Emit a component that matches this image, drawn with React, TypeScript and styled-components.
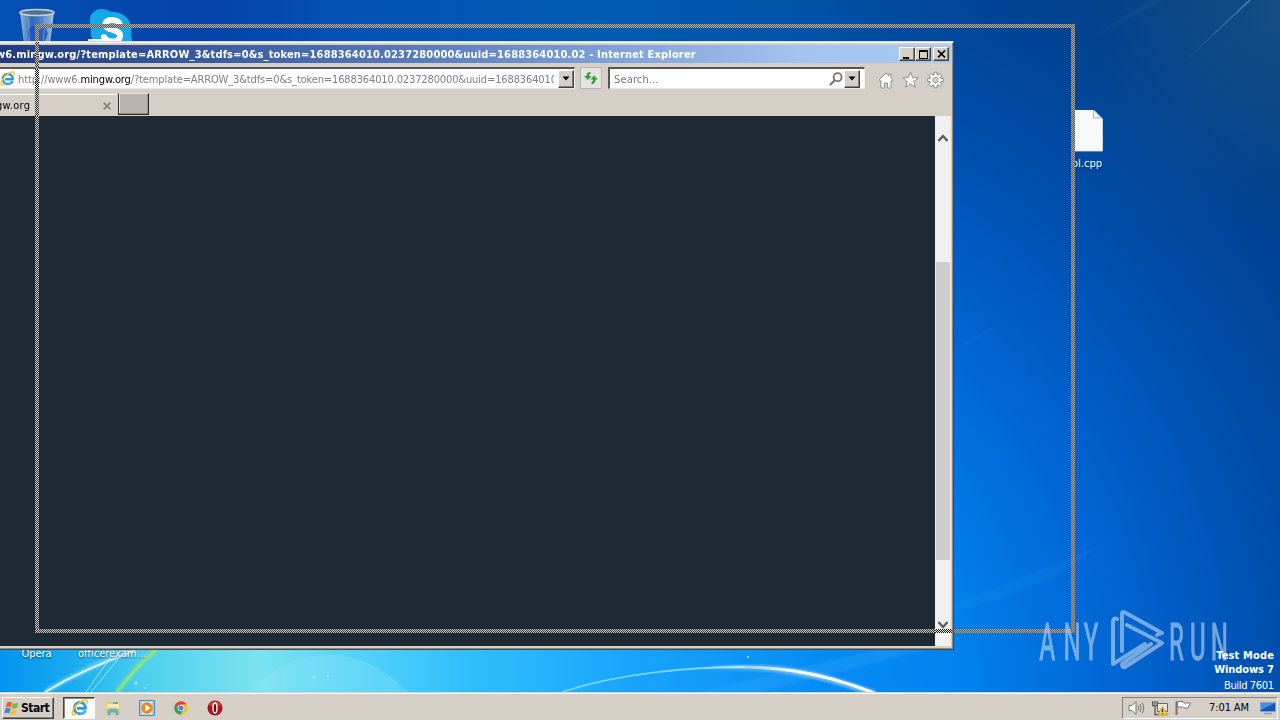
import React from 'react';
import styled, { createGlobalStyle, css } from 'styled-components';

const FACE = '#d5cfc7';

const GlobalStyle = createGlobalStyle`
  html, body { margin: 0; padding: 0; overflow: hidden; }
  body { font-family: 'DejaVu Sans Condensed', 'DejaVu Sans', sans-serif; font-stretch: condensed; font-size: 11px; color: #000; }
  * { box-sizing: border-box; }
  svg { display: block; flex: none; }
`;

const Screen = styled.div`
  position: relative;
  width: 1280px;
  height: 720px;
  overflow: hidden;
  display: flex;
  flex-direction: column;
  background: #0057b8;
`;

const Desktop = styled.main`
  position: relative;
  flex: 1;
  min-height: 0;
  overflow: hidden;
`;

const Wallpaper = styled.svg`
  position: absolute;
  inset: 0;
`;

const DesktopItem = styled.div<{ $x: number; $y: number; $w: number }>`
  position: absolute;
  left: ${p => p.$x}px;
  top: ${p => p.$y}px;
  width: ${p => p.$w}px;
  display: flex;
  flex-direction: column;
  align-items: center;
  color: #fff;
`;

const ItemLabel = styled.span<{ $spacing?: number }>`
  line-height: 14px;
  white-space: nowrap;
  letter-spacing: ${p => p.$spacing ?? 0}px;
  text-shadow: 0 1px 2px rgba(0, 20, 60, 0.7);
`;

const BuildInfo = styled.div`
  position: absolute;
  right: 6px;
  top: 649px;
  display: flex;
  flex-direction: column;
  align-items: flex-end;
  color: #fff;
  line-height: 14px;
`;

const BuildLine = styled.span<{ $bold?: boolean; $spacing: number }>`
  font-weight: ${p => (p.$bold ? 700 : 400)};
  letter-spacing: ${p => p.$spacing}px;
  margin-right: ${p => -p.$spacing}px;
  padding-top: ${p => (p.$bold ? 0 : 2)}px;
`;

const Watermark = styled.svg`
  position: absolute;
  left: 1034px;
  top: 606px;
`;

const Window = styled.section`
  position: absolute;
  left: 0;
  top: 41px;
  width: 954px;
  height: 609px;
  overflow: hidden;
  isolation: isolate;
  display: flex;
  flex-direction: column;
  background: ${FACE};
  border-top: 1px solid #d6d6d6;
  border-right: 1px solid #45484a;
  border-bottom: 1px solid #45484a;
  box-shadow: inset 0 1px #fff, inset -1px -1px #8c8880;
  padding: 3px 2px 3px 0;
`;

const TitleBar = styled.header`
  height: 18px;
  flex: none;
  display: flex;
  align-items: center;
  padding-right: 2px;
  background: linear-gradient(90deg, #1e3b80 0, #3a5a9f 200px, #5478ba 400px, #7c9fd6 600px, #a2c4f0 800px, #a6caf0 100%);
`;

const TitleText = styled.h1`
  flex: 1;
  margin: 0 0 0 -4px;
  padding-top: 1px;
  font-size: 11px;
  line-height: 17px;
  font-weight: 700;
  color: #fff;
  white-space: nowrap;
  letter-spacing: 0.168px;
`;

const raised = css`
  background: ${FACE};
  border: 1px solid;
  border-color: #fff #404040 #404040 #fff;
  box-shadow: inset -1px -1px #84807a;
`;

const CaptionButton = styled.button<{ $gap?: boolean }>`
  ${raised}
  width: 16px;
  height: 14px;
  padding: 0;
  margin-left: ${p => (p.$gap ? 2 : 0)}px;
  display: flex;
  align-items: center;
  justify-content: center;
`;

const NavBar = styled.nav`
  height: 30px;
  flex: none;
  display: flex;
  align-items: flex-start;
  padding-top: 4px;
`;

const Field = styled.div<{ $w: number; $open?: boolean }>`
  width: ${p => p.$w}px;
  height: 22px;
  display: flex;
  align-items: center;
  overflow: hidden;
  background: #fff;
  border-style: solid;
  border-color: #57534f #f5f2ee #e9e5e0 #57534f;
  border-width: 2px 1px 1px ${p => (p.$open ? 0 : 2)}px;
`;

const AddressText = styled.span`
  width: 536px;
  margin-left: 3px;
  padding-top: 2px;
  overflow: hidden;
  white-space: nowrap;
  line-height: 17px;
  color: #808080;
  letter-spacing: -0.13px;
`;

const Host = styled.span`
  color: #000;
`;

const SearchText = styled.span`
  flex: 1;
  padding: 2px 0 0 4px;
  color: #777;
  letter-spacing: 0.15px;
`;

const DropButton = styled.button<{ $ml?: number; $mr?: number }>`
  ${raised}
  flex: none;
  width: 16px;
  height: 18px;
  padding: 0;
  margin-left: ${p => p.$ml ?? 0}px;
  margin-right: ${p => p.$mr ?? 0}px;
  display: flex;
  align-items: center;
  justify-content: center;
`;

const RefreshButton = styled.button`
  width: 22px;
  height: 22px;
  margin: 0 6px 0 5px;
  padding: 0;
  display: flex;
  align-items: center;
  justify-content: center;
  background: #e5e3e0;
  border: 1px solid #b6b6b9;
`;

const Tools = styled.div`
  display: flex;
  gap: 8px;
  padding: 4px 0 0 13px;
`;

const TabStrip = styled.div`
  height: 23px;
  flex: none;
  display: flex;
`;

const Tab = styled.div`
  width: 117px;
  height: 22px;
  margin-top: 1px;
  display: flex;
  align-items: center;
  justify-content: space-between;
  padding-right: 6px;
  border-top: 1px solid #fff;
`;

const TabTitle = styled.span`
  margin-left: -4px;
  letter-spacing: 0.25px;
`;

const NewTab = styled.button`
  width: 31px;
  height: 22px;
  margin: 0 0 0 1px;
  padding: 0;
  background: #bbb4ae;
  border: 1px solid #2c2c2c;
  border-top-color: #e9e6e2;
  box-shadow: inset -1px -1px #938d87, inset 1px 0 #e9e6e2;
`;

const Content = styled.div`
  flex: 1;
  min-height: 0;
  display: flex;
`;

const PageView = styled.div`
  width: 935px;
  flex: none;
  background: #1e2a33;
`;

const ScrollBar = styled.div`
  flex: 1;
  display: flex;
  flex-direction: column;
  background: #f0f0f1;
  border-right: 1px solid #f7e9d6;
  padding: 17px 0 16px 1px;
`;

const ScrollTrack = styled.div`
  flex: 1;
  padding-top: 118px;
`;

const ScrollThumb = styled.div`
  width: 14px;
  height: 298px;
  background: #cdcdcd;
`;

const DragFrame = styled.div<{ $top: number; $invert?: boolean }>`
  position: absolute;
  left: 35px;
  top: ${p => p.$top}px;
  width: 1040px;
  height: 609px;
  display: grid;
  grid-template: 4px 1fr 4px / 4px 1fr 4px;
  pointer-events: none;
  --on: ${p => (p.$invert ? '#fff' : '#bdb5a9')};
  --off: ${p => (p.$invert ? '#000' : '#4a5056')};
  mix-blend-mode: ${p => (p.$invert ? 'difference' : 'normal')};
`;

const FrameEdge = styled.div<{ $area: string; $soft?: boolean }>`
  grid-area: ${p => p.$area};
  background:
    ${p => (p.$soft ? 'linear-gradient(rgba(139, 128, 113, 0), rgba(139, 128, 113, 0.65)),' : '')}
    repeating-conic-gradient(var(--on) 0 25%, var(--off) 0 50%) 0 0 / 2px 2px;
`;

const Outline = ({ top, invert }: { top: number; invert?: boolean }) => (
  <DragFrame $top={top} $invert={invert}>
    <FrameEdge $area="1 / 1 / 2 / 4" />
    <FrameEdge $area="2 / 1 / 3 / 2" />
    <FrameEdge $area="2 / 3 / 3 / 4" $soft={!invert} />
    <FrameEdge $area="3 / 1 / 4 / 4" $soft={!invert} />
  </DragFrame>
);

const TaskBar = styled.footer`
  height: 28px;
  flex: none;
  display: flex;
  align-items: center;
  padding: 2px 2px 0 2px;
  background: ${FACE};
  border-top: 1px solid #d8d4cd;
  box-shadow: inset 0 1px #fff;
`;

const StartButton = styled.button`
  ${raised}
  width: 52px;
  height: 22px;
  padding: 0 0 0 1px;
  display: flex;
  align-items: center;
  gap: 1px;
  font: 700 12px 'DejaVu Sans Condensed', 'DejaVu Sans', sans-serif;
  letter-spacing: -0.5px;
`;

const TaskButton = styled.button<{ $active?: boolean }>`
  width: ${p => (p.$active ? 32 : 34)}px;
  height: 22px;
  margin: 0 ${p => (p.$active ? '1px 0 9px' : '0')};
  padding: 0;
  display: flex;
  align-items: center;
  justify-content: center;
  border: 1px solid transparent;
  background: none;
  ${p =>
    p.$active &&
    css`
      background: #fbfafa;
      border-color: #404040 #fff #fff #404040;
      box-shadow: inset 1px 1px #8a8680;
    `}
`;

const Tray = styled.div`
  width: 156px;
  height: 22px;
  margin-left: auto;
  display: flex;
  align-items: center;
  padding-left: 5px;
  border: 1px solid;
  border-color: #85817b #fff #fff #85817b;
`;

const TrayIcons = styled.div`
  display: flex;
  gap: 7px;
`;

const Clock = styled.time`
  width: 42px;
  margin: 0 9px 0 17px;
  white-space: nowrap;
  letter-spacing: -0.1px;
`;

const IELogo = ({ size }: { size: number }) => (
  <svg width={size} height={size} viewBox="0 0 16 16" fill="none">
    <path d="M13.400 10.800c-.8 2-2.700 3-5 3-3.300 0-5.300-2.200-5.300-5.200 0-3.200 2.400-5.400 5.400-5.400 3.200 0 5.200 2.400 5.100 5.600H5.500" stroke="#2a9bdc" strokeWidth="2.600" />
    <path d="M13 10.800c-.8 1.700-2.500 2.500-4.600 2.500" stroke="#66c8f4" strokeWidth="1" />
    <path d="M1.700 14.800C-.3 13 3.200 6.800 8 3.400 11.500.8 15 .2 15.200 2.200c.1.700-.1 1.400-.5 2.100M1.700 14.800c1 .5 2.700-.2 4.300-1.300" stroke="#f3c52f" strokeWidth="1.500" />
  </svg>
);

const DownTriangle = () => (
  <svg width="8" height="5" viewBox="0 0 8 5"><path d="M.5.5h7L4 4.500z" fill="#000" /></svg>
);

const BinIcon = () => (
  <svg width="38" height="46" viewBox="0 0 38 46">
    <defs>
      <linearGradient id="bin" x1="0" x2="1">
        <stop offset="0" stopColor="#a5c4e2" stopOpacity=".9" />
        <stop offset=".35" stopColor="#3e6fb4" stopOpacity=".8" />
        <stop offset=".7" stopColor="#6d9bd2" stopOpacity=".8" />
        <stop offset="1" stopColor="#bcd6ec" stopOpacity=".9" />
      </linearGradient>
    </defs>
    <path d="M2 4l5 40h24l5-40z" fill="url(#bin)" />
    <path d="M10 22l5-5 5 6 7-5 3 8-4 9-12 1-4-8z" fill="#1556ba" opacity=".75" />
    <path d="M10 9l2 29M27 9l-2 29" stroke="#c5ddf1" opacity=".35" />
    <ellipse cx="19" cy="4.500" rx="17" ry="3" fill="#526f94" stroke="#c3d0da" strokeWidth="1.600" />
  </svg>
);

const SkypeIcon = () => (
  <svg width="48" height="48" viewBox="0 0 48 48">
    <path d="M14 1C6 1 1 7 2 14c0 2 1 4 1 6-2 12 7 24 21 23 7 5 19 2 20-9 0-2 0-4-1-6C46 14 37 3 23 4c-3-2-5-3-9-3z" fill="#16a9e8" />
    <path d="M31.500 15.500c-2-4-13-5.500-14 .5-1 7 15.500 4.500 14.500 12.500-1 7-13.500 6-16 .5" fill="none" stroke="#fff" strokeWidth="6" strokeLinecap="round" />
    <path d="M0 31h15v10H0z" fill="#e8f1f5" />
  </svg>
);

const FileIcon = () => (
  <svg width="32" height="42" viewBox="0 0 32 42">
    <path d="M0 0h23l8.500 8.500V41H0z" fill="#f7f8f8" />
    <path d="M22.500 0v8h8z" fill="#eff1f3" stroke="#939ca5" strokeWidth=".7" />
    <path d="M31.500 9v32H0" fill="none" stroke="#dfe5ea" strokeWidth=".8" />
  </svg>
);

const WallpaperArt = () => (
  <Wallpaper width="1280" height="692" viewBox="0 0 1280 692">
    <defs>
      <radialGradient id="sky" gradientUnits="userSpaceOnUse" cx="640" cy="700" r="900">
        <stop offset="0" stopColor="#149dfa" />
        <stop offset=".34" stopColor="#0084ef" />
        <stop offset=".47" stopColor="#006edd" />
        <stop offset=".58" stopColor="#005fca" />
        <stop offset=".7" stopColor="#0050af" />
        <stop offset=".83" stopColor="#004599" />
        <stop offset="1" stopColor="#033d82" />
      </radialGradient>
      <linearGradient id="topStrip" x1="0" x2="1">
        <stop offset="0" stopColor="#0550b4" />
        <stop offset=".2" stopColor="#0442a8" />
        <stop offset=".35" stopColor="#0452b4" />
        <stop offset=".6" stopColor="#005cb2" />
        <stop offset=".8" stopColor="#0052a8" />
        <stop offset="1" stopColor="#00479a" stopOpacity="0" />
      </linearGradient>
      <linearGradient id="bottomStrip" x1="0" x2="1">
        <stop offset="0" stopColor="#0693f0" />
        <stop offset=".07" stopColor="#16a9ef" />
        <stop offset=".15" stopColor="#4dd0ee" />
        <stop offset=".27" stopColor="#7ce2f0" />
        <stop offset=".36" stopColor="#58d3f8" />
        <stop offset=".48" stopColor="#32c0fc" />
        <stop offset=".66" stopColor="#18a4fb" />
        <stop offset=".85" stopColor="#078cf4" />
        <stop offset="1" stopColor="#0080ec" stopOpacity="0" />
      </linearGradient>
      <radialGradient id="haze" gradientUnits="userSpaceOnUse" cx="1290" cy="0" r="250">
        <stop offset="0" stopColor="#1d5386" stopOpacity=".8" />
        <stop offset="1" stopColor="#0d4a87" stopOpacity="0" />
      </radialGradient>
      <linearGradient id="ray" x1="0" y1="1" x2="1" y2="0">
        <stop offset="0" stopColor="#4b96dc" stopOpacity="0" />
        <stop offset="1" stopColor="#6bacdf" stopOpacity=".6" />
      </linearGradient>
      <linearGradient id="arc" gradientUnits="userSpaceOnUse" x1="700" y1="0" x2="800" y2="0">
        <stop offset="0" stopColor="#fff" stopOpacity="0" />
        <stop offset="1" stopColor="#fff" />
      </linearGradient>
      <filter id="soft"><feGaussianBlur stdDeviation="1.200" /></filter>
    </defs>
    <path d="M0 0h1280v692H0z" fill="url(#sky)" />
    <path d="M0 0h1010v42H0z" fill="url(#topStrip)" />
    <path d="M0 649h960v43H0z" fill="url(#bottomStrip)" />
    <path d="M1000 0h280v260h-280z" fill="url(#haze)" />
    <path d="M1184 62L1250 0" stroke="url(#ray)" strokeWidth="1.500" />
    <path d="M1090 38l60-38h16z" fill="#3777b3" opacity=".13" filter="url(#soft)" />
    <path d="M954 604L1100 546l-50 34-96 34z" fill="#2a99f5" opacity=".14" filter="url(#soft)" />
    <path d="M954 350l40-22" stroke="#3a95e8" opacity=".25" />
    <path d="M700 692L880 649h50L760 692z" fill="#49b5ff" opacity=".2" filter="url(#soft)" />
    <path d="M247 692c50-48 110-52 161 0z" fill="#94e9f8" opacity=".28" />
    <path d="M45 692Q85 668 135 649" stroke="#8bdcff" strokeWidth="6" opacity=".5" fill="none" filter="url(#soft)" />
    <path d="M45 692Q85 668 135 651" stroke="#d5f5ff" strokeWidth="2" fill="none" />
    <path d="M86 692L113 654M91 692L119 658" stroke="#9ce5f6" strokeWidth="1" />
    <path d="M117 692Q135 668 157 649" stroke="#80dfac" strokeWidth="5" opacity=".7" fill="none" filter="url(#soft)" />
    <path d="M117 692Q135 668 157 649" stroke="#98e75d" strokeWidth="2" fill="none" />
    <path d="M562 692C620 673 690 667 745 667" stroke="#76d6ff" strokeWidth="1.800" fill="none" />
    <path d="M700 669C770 663 820 673 875 694" stroke="url(#arc)" strokeWidth="7" opacity=".4" fill="none" filter="url(#soft)" />
    <path d="M700 668.500C770 663 820 672 874 693" stroke="url(#arc)" strokeWidth="3" fill="none" />
    <g fill="#b9f0fc"><circle cx="136" cy="683" r="1.500" /><circle cx="145" cy="688" r=".8" /><circle cx="314" cy="677" r="1.200" /><circle cx="328" cy="676" r=".8" /><circle cx="748" cy="657" r="1" /></g>
  </Wallpaper>
);

export default function App() {
  return (
    <Screen>
      <GlobalStyle />
      <Desktop>
        <WallpaperArt />
        <DesktopItem $x={18} $y={8} $w={38}><BinIcon /></DesktopItem>
        <DesktopItem $x={88} $y={8} $w={48}><SkypeIcon /></DesktopItem>
        <DesktopItem $x={1071} $y={110} $w={32}>
          <FileIcon />
        </DesktopItem>
        <DesktopItem $x={1069} $y={157} $w={36}><ItemLabel>ol.cpp</ItemLabel></DesktopItem>
        <DesktopItem $x={18} $y={647} $w={37}><ItemLabel $spacing={-0.1}>Opera</ItemLabel></DesktopItem>
        <DesktopItem $x={74} $y={647} $w={76}><ItemLabel>officerexam...</ItemLabel></DesktopItem>
        <Outline top={24} />
        <Watermark width="202" height="68" viewBox="0 0 202 68">
          <g fill="#b9d2ee" stroke="#b9d2ee" strokeWidth=".8" opacity=".64" fontFamily="Roboto, sans-serif" fontSize="52">
            <text transform="scale(.55 1)" y="54"><tspan x="9">A</tspan><tspan x="53">N</tspan><tspan x="90">Y</tspan></text>
            <text transform="scale(.55 1)" y="54"><tspan x="245">R</tspan><tspan x="283">U</tspan><tspan x="321">N</tspan></text>
          </g>
          <g fill="none" stroke="#b9d2ee" strokeWidth="4" opacity=".64" strokeLinejoin="round" strokeLinecap="round">
            <path d="M83 13q-4-2-4 3v42l32-20" />
            <path d="M88 45V8q0-3 3-1.500l37 20.500-5 2" />
            <path d="M93 19l35 18-37 24q-3 1-3-3l29-20" />
          </g>
        </Watermark>
        <BuildInfo>
          <BuildLine $bold $spacing={0.15}>Test Mode</BuildLine>
          <BuildLine $bold $spacing={-0.1}>Windows 7</BuildLine>
          <BuildLine $spacing={-0.35}>Build 7601</BuildLine>
        </BuildInfo>

        <Window>
          <TitleBar>
            <TitleText>w6.mingw.org/?template=ARROW_3&amp;tdfs=0&amp;s_token=1688364010.0237280000&amp;uuid=1688364010.02 - Internet Explorer</TitleText>
            <CaptionButton aria-label="Minimize"><svg width="10" height="9"><path d="M1 7h6v2H1z" /></svg></CaptionButton>
            <CaptionButton aria-label="Maximize"><svg width="9" height="9"><path d="M0 0h9v9H0zM1 2v6h7V2z" fillRule="evenodd" /></svg></CaptionButton>
            <CaptionButton $gap aria-label="Close"><svg width="9" height="8" viewBox="0 0 9 8"><path d="M1 .5l7 7M8 .5l-7 7" stroke="#000" strokeWidth="1.700" /></svg></CaptionButton>
          </TitleBar>
          <NavBar>
            <Field $w={575} $open>
              <IELogo size={15} />
              <AddressText>http://www6.<Host>mingw.org</Host>/?template=ARROW_3&amp;tdfs=0&amp;s_token=1688364010.0237280000&amp;uuid=1688364010</AddressText>
              <DropButton $ml={4}><DownTriangle /></DropButton>
            </Field>
            <RefreshButton aria-label="Refresh">
              <svg width="16" height="16" viewBox="0 0 16 16" fill="#379b38">
                <path d="M7.500 2C4.500 2 3.500 4 3.500 6H1l4 4 3.500-4H6c0-1.500.3-2 1.500-2z" />
                <path d="M8.500 14c3 0 4-2 4-4.500H15l-4-4-3.500 4H10c0 1.600-.3 2.500-1.500 2.500z" />
              </svg>
            </RefreshButton>
            <Field $w={257}>
              <SearchText>Search...</SearchText>
              <svg width="14" height="14" viewBox="0 0 14 14" fill="none" stroke="#77736f" strokeWidth="1.800"><circle cx="8.600" cy="5.200" r="4" /><path d="M5.700 8.300L1 13" strokeWidth="2.200" /></svg>
              <DropButton $ml={1} $mr={4}><DownTriangle /></DropButton>
            </Field>
            <Tools>
              <svg width="16" height="18" viewBox="0 0 16 18"><path d="M8 2L1 9l1 1.500 1-.8V17h3.500v-5h3v5H13V9.700l1 .8L15 9l-2.200-2.200V3h-2v2z" fill="#fff" stroke="#8a8681" strokeWidth=".9" /></svg>
              <svg width="17" height="18" viewBox="0 0 17 18"><path d="M8.500 1.200l2.100 5.400 5.700.3-4.500 3.600 1.500 5.700-4.800-3.200-4.800 3.200 1.500-5.700L.7 6.900l5.700-.3z" fill="#fff" stroke="#8a8681" strokeWidth=".9" /></svg>
              <svg width="17" height="18" viewBox="0 0 17 18">
                <g transform="translate(8.500 9)">
                  <circle r="4.300" fill="none" stroke="#85817b" strokeWidth="3.800" />
                  {[0, 45, 90, 135, 180, 225, 270, 315].map(a => <path key={a} transform={`rotate(${a})`} d="M-1.500-5v-2.800h3V-5" fill="#fff" stroke="#85817b" strokeWidth=".9" />)}
                  <circle r="4.200" fill="none" stroke="#fff" strokeWidth="2.300" />
                </g>
              </svg>
            </Tools>
          </NavBar>
          <TabStrip>
            <Tab>
              <TabTitle>gw.org</TabTitle>
              <svg width="8" height="8" viewBox="0 0 8 8"><path d="M.6.6l6.800 6.800M7.400.6L.6 7.400" stroke="#85817c" strokeWidth="1.700" /></svg>
            </Tab>
            <NewTab aria-label="New tab" />
          </TabStrip>
          <Content>
            <PageView />
            <ScrollBar>
              <svg width="14" height="11" viewBox="0 0 14 11"><path d="M2.500 8L7 3l4.500 5" fill="none" stroke="#5c5c5f" strokeWidth="2.400" /></svg>
              <ScrollTrack><ScrollThumb /></ScrollTrack>
              <svg width="14" height="11" viewBox="0 0 14 11"><path d="M2.500 3L7 8l4.500-5" fill="none" stroke="#5c5c5f" strokeWidth="2.400" /></svg>
            </ScrollBar>
          </Content>
          <Outline top={-18} invert />
        </Window>
      </Desktop>

      <TaskBar>
        <StartButton>
          <svg width="16" height="16" viewBox="0 0 16 16">
            <path d="M3 2.500c2-1.300 3.500-1 5 0L6.800 7.600c-1.700-1-3.200-1-5.100.1z" fill="#e96332" />
            <path d="M8.700 3c1.800.9 3.500.8 5.600-.4L13 7.800c-1.900 1-3.600 1.100-5.500.2z" fill="#7ab83c" />
            <path d="M1.500 8.500c1.800-1.100 3.400-1 5.100 0l-1.300 5c-1.700-1-3.300-1-5.200.1z" fill="#3f83d4" />
            <path d="M7.300 9c1.800.9 3.500.8 5.500-.3l-1.300 5.200c-1.900 1-3.600 1-5.500.1z" fill="#f4c32f" />
          </svg>
          Start
        </StartButton>
        <TaskButton $active aria-label="Internet Explorer"><IELogo size={17} /></TaskButton>
        <TaskButton aria-label="Explorer">
          <svg width="16" height="16" viewBox="0 0 16 16">
            <path d="M1 2h5l1 2h8v10H1z" fill="#e9c766" /><path d="M2 4h12v5H2z" fill="#f8edb5" /><path d="M8 2h5v2H8z" fill="#7bb960" />
            <path d="M1 7h14v2H1z" fill="#f5dc83" /><path d="M3 15v-4c0-1 1-2 2-2h6c1 0 2 1 2 2v4h-2v-3H5v3z" fill="#66b6e2" stroke="#3a92c6" strokeWidth=".5" />
          </svg>
        </TaskButton>
        <TaskButton aria-label="Media Player">
          <svg width="16" height="16" viewBox="0 0 16 16">
            <path d="M.5.5h15v15H.5z" fill="#a9cdec" stroke="#4c88c0" /><path d="M3 1.500h10v13H3z" fill="#d3e6f5" />
            <circle cx="8" cy="8" r="5.800" fill="#f18a16" /><path d="M6.300 4.500v7L11.500 8z" fill="#fff" />
          </svg>
        </TaskButton>
        <TaskButton aria-label="Chrome">
          <svg width="14" height="14" viewBox="0 0 14 14">
            <circle cx="7" cy="7" r="6.700" fill="#f2c02c" />
            <path d="M1.200 3.600A6.700 6.700 0 0 1 12.800 3.600H7L4.200 8.600z" fill="#dc4437" />
            <path d="M1.200 3.600A6.700 6.700 0 0 0 6.300 13.700L9.600 8.800 4.300 9z" fill="#30a257" />
            <circle cx="7" cy="7" r="3.300" fill="#fff" /><circle cx="7" cy="7" r="2.600" fill="#4681ed" />
          </svg>
        </TaskButton>
        <TaskButton aria-label="Opera">
          <svg width="16" height="16" viewBox="0 0 16 16">
            <circle cx="8" cy="8" r="7.500" fill="#ad1217" /><path d="M2 5a7 7 0 0 1 12 0c-3 2-9 2-12 0z" fill="#d95552" opacity=".7" />
            <ellipse cx="8" cy="8" rx="2" ry="5" fill="#7c070b" stroke="#fff" strokeWidth="1.400" />
          </svg>
        </TaskButton>
        <Tray>
          <TrayIcons>
            <svg width="17" height="16" viewBox="0 0 17 16" fill="none" stroke="#77736f">
              <path d="M1 5.500h3L8 1.500v13l-4-4H1z" fill="#fff" /><path d="M10 5.500q1.500 2.500 0 5M12 4q2.500 4 0 8M14 2.500q3.500 5.500 0 11" />
            </svg>
            <svg width="16" height="16" viewBox="0 0 16 16" fill="none">
              <path d="M5.500 3.500h10v8h-10z" fill="#e7e5e0" stroke="#6c6964" />
              <path d="M.7 1v4.500h4.600V1M3 1v3M3 6v8.500h4" stroke="#5b5854" strokeWidth="1.300" />
              <path d="M10.500 6.500L15.500 15h-10z" fill="#f9d42c" stroke="#a17d15" strokeWidth=".6" /><path d="M10.500 9v3m0 1v1" stroke="#222" strokeWidth="1.200" />
            </svg>
            <svg width="17" height="16" viewBox="0 0 17 16"><path d="M1.500 15V1.500" stroke="#77736f" strokeWidth="2" /><path d="M2.500 1.500h5.500l1 1.500h6.500l-2.500 5H8.500L7.500 7h-5z" fill="#fff" stroke="#77736f" /></svg>
          </TrayIcons>
          <Clock>7:01 AM</Clock>
          <svg width="16" height="14" viewBox="0 0 16 14"><path d="M.5 1.500h15v9H.5z" fill="#1757b4" stroke="#7fa4d2" /><path d="M1 2h14L1 9z" fill="#4a8ce0" /><path d="M4 12.500h8" stroke="#83a2c5" strokeWidth="1.500" /></svg>
        </Tray>
      </TaskBar>
    </Screen>
  );
}
